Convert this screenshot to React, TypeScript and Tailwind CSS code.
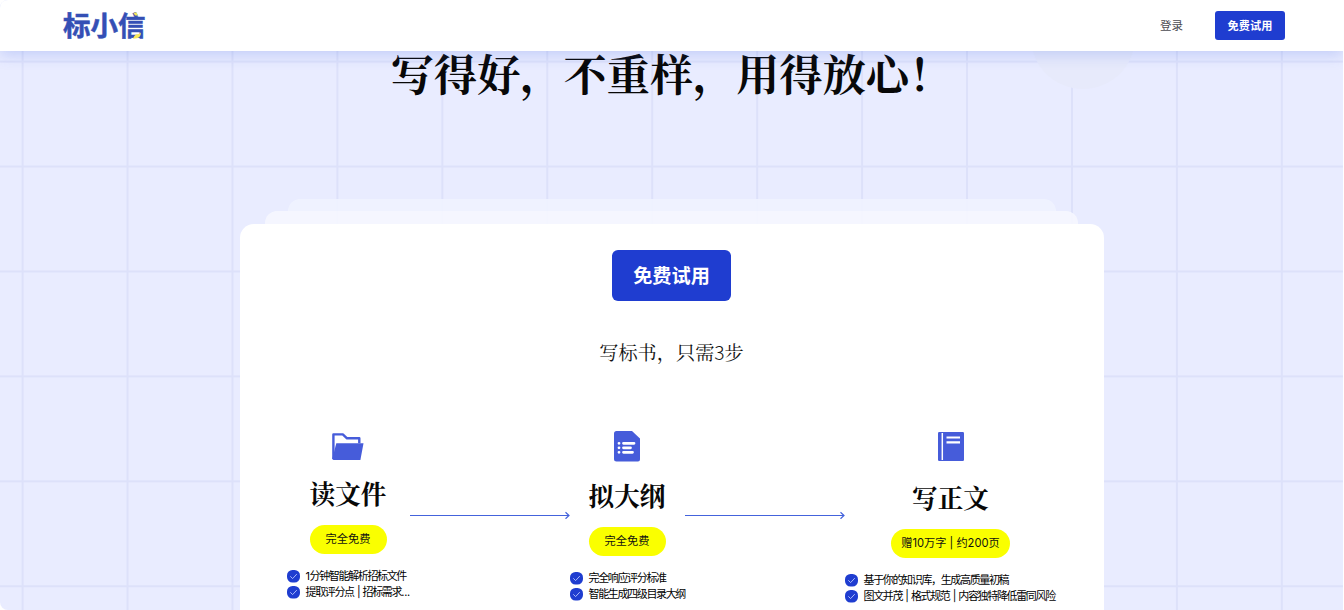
import type { ReactNode } from "react";

const serif = "font-['Noto_Serif_CJK_SC','Noto_Serif_SC','Liberation_Serif','Noto_Sans_CJK_SC',serif]";

function FolderIcon() {
  return (
    <svg width="32" height="28" viewBox="0 0 32 28">
      <path d="M1.400 26V1.400h9.400l4.200 3.900h12.300v5" fill="none" stroke="#465cda" strokeWidth="2.400" strokeLinejoin="round" />
      <path d="M4.300 10.300h27.200L28.400 27H1.600C.8 27 .3 26.300.4 25.600z" fill="#465cda" />
    </svg>
  );
}

function OutlineIcon() {
  return (
    <svg width="26" height="31" viewBox="0 0 26 31">
      <path d="M2.500 0h15.500l8 7.500V28.500q0 2-2 2H2.500q-2.500 0-2.500-2.500V2.500Q0 0 2.500 0z" fill="#465cda" />
      <g fill="none" stroke="#fff" strokeWidth="2.800" strokeLinecap="round">
        <path d="M5 12.300h.01M5 16.800h.01M5 21.300h.01M9.500 12.300H20M9.500 16.800H16.500M9.500 21.300H18.500" />
      </g>
    </svg>
  );
}

function BookIcon() {
  return (
    <svg width="26" height="29" viewBox="0 0 26 29">
      <rect width="26" height="29" rx="1.200" fill="#465cda" />
      <path d="M4.300 1v27" stroke="#fff" strokeWidth="1.500" />
      <path d="M8.500 5.500H22M8.500 10.300H22" stroke="#fff" strokeWidth="2.200" />
    </svg>
  );
}

function Arrow() {
  return (
    <svg width="160" height="8" viewBox="0 0 160 8" className="mt-20 shrink-0">
      <path d="M0 4.500h159M155.500 1.200l3.500 3.300-3.500 3.300" fill="none" stroke="#4463dc" strokeWidth="1.200" />
    </svg>
  );
}

function CheckItem({ children }: { children: ReactNode }) {
  return (
    <li className="flex h-4 items-center gap-1.5 whitespace-nowrap">
      <svg width="13" height="13" viewBox="0 0 13 13" className="shrink-0">
        <rect width="13" height="12.500" rx="5.500" fill="#1f3dd0" />
        <path d="M3.300 6.300l2.300 2.300 4.200-4.500" fill="none" stroke="#b9c6ff" strokeWidth=".9" />
      </svg>
      <span className="text-[11px] leading-4 tracking-[-1.35px] text-black [word-spacing:1.500px]">{children}</span>
    </li>
  );
}

type StepProps = {
  icon: ReactNode;
  title: string;
  tag: string;
  items: ReactNode[];
  className: string;
  titleClass: string;
  tagClass: string;
};

function Step({ icon, title, tag, items, className, titleClass, tagClass }: StepProps) {
  return (
    <div className={`flex shrink-0 flex-col items-center ${className}`}>
      <div className="flex h-[31px] items-center">{icon}</div>
      <h3 className={`text-[25.6px] font-bold leading-[36px] text-[#080808] ${titleClass} ${serif}`}>{title}</h3>
      <div
        className={`mt-[14px] flex h-[29px] items-center justify-center whitespace-nowrap rounded-full bg-[#faff00] text-[11.2px] ${tagClass}`}
      >
        {tag}
      </div>
      <ul className="mt-[14px] self-start">
        {items.map((item, i) => (
          <CheckItem key={i}>{item}</CheckItem>
        ))}
      </ul>
    </div>
  );
}

function Logo() {
  return (
    <svg width="96" height="42" viewBox="0 -4 96 42" className="ml-[62px]">
      <text
        x="1"
        y="26.500"
        fontSize="27.500"
        fontWeight="700"
        fill="#344fb5"
        stroke="#344fb5"
        strokeWidth=".5"
        fontFamily="'Noto Sans CJK SC', sans-serif"
      >
        标小信
      </text>
      <path d="M71.500 4l2.800-.8 1.700 3.300h-3z" fill="#f7e85a" />
      <path d="M71 29.800q1-3.800 4.200-4.600 2.500-.2 3.800-1.700-.4 5-4 5.700-2 .2-4 .6z" fill="#f7e85a" />
    </svg>
  );
}

export default function App() {
  return (
    <div className="h-[610px] w-[1344px] overflow-hidden bg-white pr-px font-['Inter','Noto_Sans_CJK_SC',sans-serif] text-[#111]">
      <div className="h-full overflow-hidden rounded-l-[8px] bg-[#e9ecff] bg-[linear-gradient(to_right,#dde1fa_2px,transparent_2px),linear-gradient(to_bottom,#dde1fa_2px,transparent_2px)] bg-[size:104.95px_104.95px] bg-[position:21.600px_60.600px]">
        <header className="relative z-10 flex h-[51px] items-center bg-white shadow-[0_4px_14px_rgba(60,95,225,0.22)]">
          <Logo />
          <a className="ml-auto pt-0.5 text-[11.5px] text-[#4b4b52]">登录</a>
          <button className="ml-8 mr-[58px] h-[29px] w-[70px] rounded-[3px] bg-[#1f3dd0] pt-0.5 text-[11.2px] font-bold text-white">
            免费试用
          </button>
        </header>

        <main className="relative flex flex-col items-center">
          <div className="absolute -top-[66px] left-[1031px] size-[104px] rounded-full bg-[#e7eafb]" />
          <h1 className={`relative h-[148px] whitespace-nowrap text-[43.2px] font-bold leading-[43px] text-[#080808] ${serif}`}>
            写得好，不重样，用得放心！
          </h1>
          <div className="h-3 w-[768px] rounded-t-xl bg-[#f0f3ff]/90" />
          <div className="h-[13px] w-[813px] rounded-t-xl bg-[#f6f7ff]/90" />

          <section className="flex h-[500px] w-[864px] flex-col items-center rounded-t-[14px] bg-white pt-[26px]">
            <button className="h-[51px] w-[119px] rounded-[6px] bg-[#1f3dd0] pt-0.5 text-[19.2px] font-bold text-white">
              免费试用
            </button>
            <p className={`mt-[37px] text-[19.2px] leading-[28px] ${serif}`}>
              写标书，只需<span className="font-['Noto_Sans_CJK_SC',sans-serif] font-light">3</span>步
            </p>
            <div className="mt-[65px] flex w-[770px] items-start">
              <Step
                className="w-[123px]"
                titleClass="mt-[13px]"
                tagClass="w-[77px]"
                icon={<FolderIcon />}
                title="读文件"
                tag="完全免费"
                items={[
                  <><span className="tracking-[-0.500px]">1</span>分钟智能解析招标文件</>,
                  <>提取评分点 | 招标需求<span className="tracking-[-0.200px]">...</span></>,
                ]}
              />
              <Arrow />
              <Step
                className="w-[115px]"
                titleClass="mt-[15px]"
                tagClass="w-[77px]"
                icon={<OutlineIcon />}
                title="拟大纲"
                tag="完全免费"
                items={["完全响应评分标准", "智能生成四级目录大纲"]}
              />
              <Arrow />
              <Step
                className="w-[212px]"
                titleClass="mt-[17px]"
                tagClass="w-[119px]"
                icon={<BookIcon />}
                title="写正文"
                tag="赠10万字 | 约200页"
                items={["基于你的知识库，生成高质量初稿", "图文并茂 | 格式规范 | 内容独特降低雷同风险"]}
              />
            </div>
          </section>
        </main>
      </div>
    </div>
  );
}
